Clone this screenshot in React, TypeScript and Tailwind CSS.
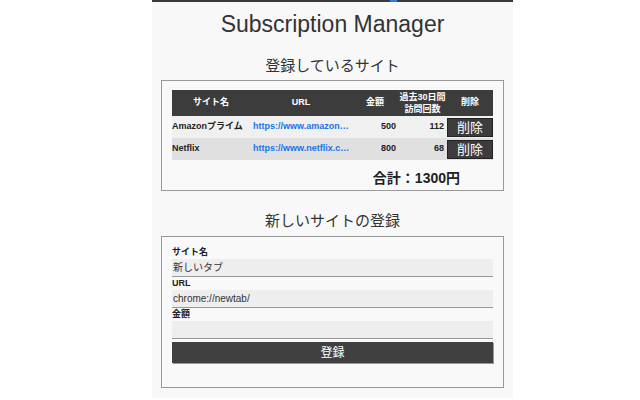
import React from 'react';

const font = { fontFamily: '"Liberation Sans", "Noto Sans CJK JP", sans-serif' };

export default function App() {
  const sites = [
    { name: 'Amazonプライム', url: 'https://www.amazon.co.jp/', price: 500, visits: 112 },
    { name: 'Netflix', url: 'https://www.netflix.com/', price: 800, visits: 68 }
  ];
  return <div className="w-[640px] h-[400px] bg-white flex pl-[152px]" style={font}>
      <div className="w-[361px] h-[398px] bg-[#f8f8f8] flex flex-col">
        <div className="flex h-[2px]">
          <div className="w-[238px] bg-[#3a3a3a]"></div>
          <div className="w-[7px] bg-[#2a7de1]"></div>
          <div className="flex-1 bg-[#3a3a3a]"></div>
        </div>
        <h1 className="text-[23px] leading-none text-[#333] text-center mt-[11px]">Subscription Manager</h1>
        <h2 className="text-[15px] leading-none text-[#333] text-center mt-[22px]">登録しているサイト</h2>
        <div className="mx-[9px] mt-[7px] border border-[#999] bg-[#f9f9f9] pt-[9px] pb-[1px] px-[10px]">
          <table className="w-[321px] table-fixed border-collapse text-[9px] font-bold text-[#222]">
            <colgroup>
              <col className="w-[78px]" />
              <col className="w-[102px]" />
              <col className="w-[46px]" />
              <col className="w-[49px]" />
              <col className="w-[46px]" />
            </colgroup>
            <thead>
              <tr className="bg-[#3c3c3c] text-white">
                <th className="font-bold h-[26px]">サイト名</th>
                <th className="font-bold">URL</th>
                <th className="font-bold">金額</th>
                <th className="font-bold leading-[12px]">過去30日間<br />訪問回数</th>
                <th className="font-bold">削除</th>
              </tr>
            </thead>
            <tbody>
              {sites.map((s, i) => <tr key={s.name} className={i % 2 === 0 ? 'bg-[#f0f0f0]' : 'bg-[#e0e0e0]'}>
                  <td className="pl-0 h-[22px] whitespace-nowrap">{s.name}</td>
                  <td className="pl-[3px] pr-[2px] text-[#1a73e8] truncate">{s.url}</td>
                  <td className="text-right pr-[2px]">{s.price}</td>
                  <td className="text-right pr-[3px]">{s.visits}</td>
                  <td className="p-0">
                    <div className="bg-[#3c3c3c] border border-[#222] text-white text-[13px] font-normal text-center h-[19px] leading-[17px]">削除</div>
                  </td>
                </tr>)}
            </tbody>
          </table>
          <div className="flex justify-end pr-[33px] mt-[8px]">
            <span className="text-[14px] font-bold text-[#222]">合計：1300円</span>
          </div>
        </div>
        <h2 className="text-[15px] leading-none text-[#333] text-center mt-[22px]">新しいサイトの登録</h2>
        <div className="mx-[9px] mt-[8px] h-[152px] border border-[#999] bg-[#f9f9f9] pt-[9px] px-[10px] flex flex-col">
          <label className="text-[9px] font-bold text-[#222] leading-[13px]">サイト名</label>
          <div className="h-[18px] bg-[#eee] border-b border-[#999] text-[10px] text-[#333] pl-[1px] leading-[17px]">新しいタブ</div>
          <label className="text-[9px] font-bold text-[#222] leading-[13px]">URL</label>
          <div className="h-[18px] bg-[#eee] border-b border-[#999] text-[10px] text-[#333] pl-[1px] leading-[17px]">chrome://newtab/</div>
          <label className="text-[9px] font-bold text-[#222] leading-[13px]">金額</label>
          <div className="h-[18px] bg-[#eee] border-b border-[#999]"></div>
          <button className="mt-[3px] h-[21px] bg-[#404040] text-white text-[12px] shadow-[1px_1px_0_#999]">登録</button>
        </div>
      </div>
    </div>;
}
